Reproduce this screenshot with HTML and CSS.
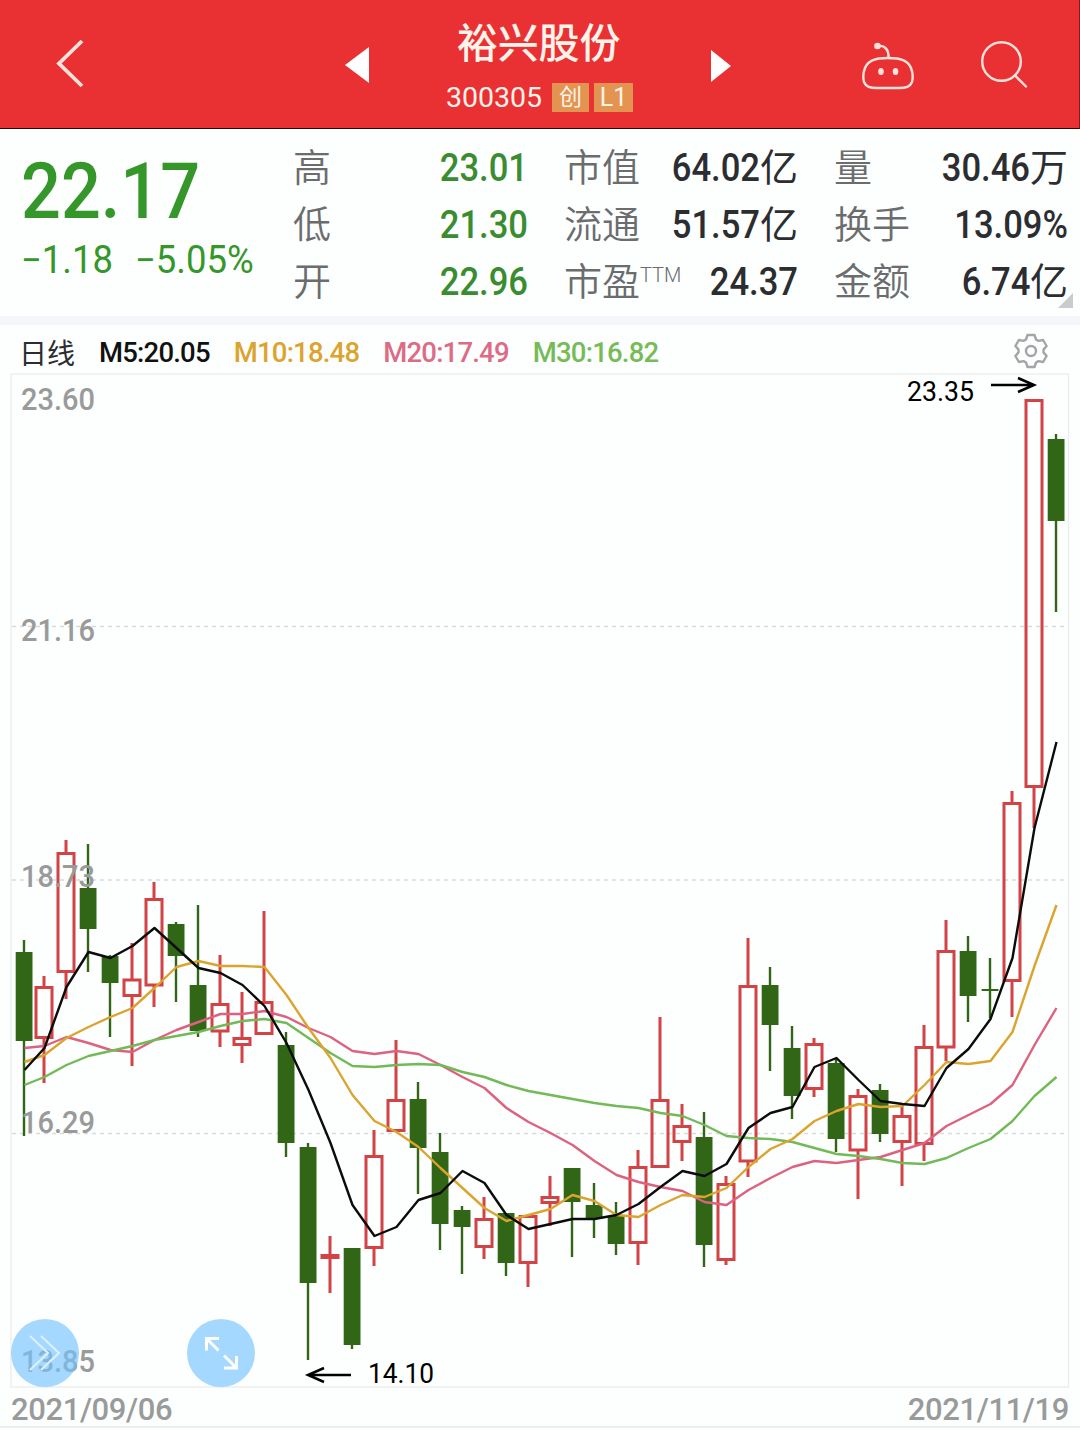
FILE: index.html
```html
<!DOCTYPE html>
<html lang="zh-CN">

<head>
  <meta charset="UTF-8">
  <meta name="viewport" content="width=device-width, initial-scale=1.0">
  <title>裕兴股份 300305</title>
  <link rel="stylesheet" href="styles.css">
</head>

<body>
  <header class="topbar">
    <svg class="back" width="32" height="52" viewBox="0 0 32 52"><path d="M28 5L5 27.500L28 50" /></svg>
    <svg class="prev" width="24" height="36" viewBox="0 0 24 36"><path d="M0 18L24 0V36Z" /></svg>
    <div class="stock">
      <h1>裕兴股份</h1>
      <div class="code">
        <span>300305</span>
        <span class="tag">创</span>
        <span class="tag">L1</span>
      </div>
    </div>
    <svg class="next" width="20" height="32" viewBox="0 0 20 32"><path d="M0 0L20 16L0 32Z" /></svg>
    <svg class="robot" width="54" height="50" viewBox="0 0 54 50">
      <path d="M17 5C24 4 28 9 27.500 17" />
      <path d="M27 17C41 17 47 20 50 27C52 32 52 37 51 41C49 46 45 47 38 47H16C9 47 5 46 3 41C2 37 2 32 4 27C7 20 13 17 27 17Z" />
      <circle class="dot" cx="16.500" cy="5" r="3.300" />
      <ellipse class="dot" cx="20" cy="30.500" rx="2.800" ry="3.600" />
      <ellipse class="dot" cx="34.500" cy="30.500" rx="2.800" ry="3.600" />
    </svg>
    <svg class="search" width="50" height="50" viewBox="0 0 50 50">
      <circle cx="21.500" cy="21.500" r="19.300" />
      <path d="M35 35.500L46 46.500" />
    </svg>
  </header>

  <section class="quote">
    <div class="price">
      <div class="last">22.17</div>
      <div class="change"><span>−1.18</span><span>−5.05%</span></div>
    </div>
    <dl class="stats">
      <dt>高</dt><dd class="down"><b>23.01</b></dd>
      <dt>市值</dt><dd><b>64.02</b>亿</dd>
      <dt>量</dt><dd><b>30.46</b>万</dd>
      <dt>低</dt><dd class="down"><b>21.30</b></dd>
      <dt>流通</dt><dd><b>51.57</b>亿</dd>
      <dt>换手</dt><dd><b>13.09%</b></dd>
      <dt>开</dt><dd class="down"><b>22.96</b></dd>
      <dt>市盈<sup>TTM</sup></dt><dd><b>24.37</b></dd>
      <dt>金额</dt><dd><b>6.74</b>亿</dd>
    </dl>
    <i class="corner"></i>
  </section>

  <div class="legend">
    <span class="period">日线</span>
    <span class="m5">M5:20.05</span>
    <span class="m10">M10:18.48</span>
    <span class="m20">M20:17.49</span>
    <span class="m30">M30:16.82</span>
    <svg class="gear" width="36" height="36" viewBox="-18 -18 36 36">
      <path d="M-3.500 -16H3.500L5 -11.500L7.500 -10.100L12.100 -11L15.600 -5L12.500 -1.400V1.400L15.600 5L12.100 11L7.500 10.100L5 11.500L3.500 16H-3.500L-5 11.500L-7.500 10.100L-12.100 11L-15.600 5L-12.500 1.400V-1.400L-15.600 -5L-12.100 -11L-7.500 -10.100L-5 -11.500Z" />
      <circle r="5" />
    </svg>
  </div>

  <svg id="chart" class="chart" width="1080" height="1015" viewBox="0 373 1080 1015">
    <rect class="frame" x="11" y="374" width="1057.500" height="1013" />
    <path class="grid" d="M12 626.500H1068M12 880H1068M12 1133.500H1068" />
    <g id="candles"></g>
    <g id="averages"></g>
    <g class="axis">
      <text x="21" y="410" textLength="74" lengthAdjust="spacingAndGlyphs">23.60</text>
      <text x="21" y="641" textLength="74" lengthAdjust="spacingAndGlyphs">21.16</text>
      <text x="21" y="887" textLength="74" lengthAdjust="spacingAndGlyphs">18.73</text>
      <text x="21" y="1133" textLength="74" lengthAdjust="spacingAndGlyphs">16.29</text>
      <text x="21" y="1372" textLength="74" lengthAdjust="spacingAndGlyphs">13.85</text>
    </g>
    <g class="mark">
      <text x="907" y="401" textLength="67" lengthAdjust="spacingAndGlyphs">23.35</text>
      <path d="M991 385H1034M1018 378L1034 385L1018 392" />
      <text x="368" y="1383" textLength="66" lengthAdjust="spacingAndGlyphs">14.10</text>
      <path d="M351 1375H308M324 1368L308 1375L324 1382" />
    </g>
    <g class="round">
      <circle cx="45" cy="1353" r="34" />
      <path class="thin" d="M30 1336L48 1353L30 1370M41 1336L59 1353L41 1370" />
      <circle cx="221" cy="1353" r="34" />
      <path d="M219 1338.500H206.500V1350.500M206.500 1338.500L218.500 1350.500M224 1368H236.500V1356M236.500 1368L224 1355.500" />
    </g>
  </svg>

  <footer class="dates">
    <span>2021/09/06</span>
    <span>2021/11/19</span>
  </footer>

  <script src="script.js"></script>
</body>

</html>
```
FILE: styles.css
```css
* {
  box-sizing: border-box;
}

body {
  margin: 0;
  width: 1080px;
  background-color: #fdfefe;
  font-family: Roboto, "Noto Sans CJK SC", sans-serif;
}

svg {
  display: block;
  flex: none;
  fill: none;
}

.topbar {
  display: flex;
  align-items: flex-start;
  height: 129px;
  background-color: #e93134;
  border-bottom: 1px solid #2b0808;
  border-right: 1px solid #7a2022;
  color: #fff3ea;
}

.topbar svg {
  stroke: #ffe3da;
  stroke-width: 2.4;
  stroke-linecap: round;
}

.topbar .back {
  margin: 36px 0 0 54px;
  stroke-width: 3.8;
  stroke-linecap: butt;
}

.topbar .prev {
  margin: 47px 0 0 259px;
  fill: #fff;
  stroke: none;
}

.topbar .next {
  margin: 50px 0 0 41px;
  fill: #fff;
  stroke: none;
}

.topbar .robot {
  margin: 41px 0 0 130px;
}

.topbar .search {
  margin: 40px 0 0 65px;
}

.robot .dot {
  fill: #ffe3da;
  stroke: none;
}

.stock {
  width: 237px;
  margin-left: 64px;
  padding-left: 13px;
  white-space: nowrap;
}

.stock h1 {
  margin: 14px 0 0 11px;
  font-size: 41px;
  line-height: 60px;
  font-weight: 500;
  letter-spacing: -0.2px;
}

.code {
  display: flex;
  align-items: center;
  height: 47px;
  font-size: 28.5px;
}

.tag {
  width: 37px;
  height: 29px;
  margin-left: 10px;
  background-color: #e29450;
  font-size: 23px;
  line-height: 29px;
  text-align: center;
}

.tag + .tag {
  width: 39px;
  margin-left: 5px;
  font-size: 25px;
}

.quote {
  position: relative;
  display: flex;
  height: 196px;
  padding-top: 11px;
  border-bottom: 9px solid #f5f6f9;
}

.price {
  width: 293px;
  padding-left: 21px;
  color: #35962a;
}

.last {
  font-size: 78px;
  line-height: 104px;
  font-weight: 500;
  transform: scaleX(0.9);
  transform-origin: left;
}

.change {
  display: flex;
  font-size: 38px;
  line-height: 33px;
}

.change span {
  width: 114px;
  transform: scaleX(0.96);
  transform-origin: left;
}

.stats {
  display: grid;
  grid-template-columns: 76px 159px 112px 158px 112px 158px;
  grid-auto-rows: 57px;
  margin: 0;
  font-size: 38px;
  line-height: 57px;
  white-space: nowrap;
}

.stats dt {
  color: #6a6c6e;
  font-weight: 350;
}

.stats dt:nth-of-type(3n + 2),
.stats dt:nth-of-type(3n) {
  padding-left: 36px;
}

.stats dd {
  display: flex;
  justify-content: flex-end;
  margin: 0;
  color: #2b2d30;
}

.stats b {
  font-weight: 500;
  transform: scaleX(0.91);
  transform-origin: right;
}

.stats .down b {
  color: #3a8c31;
}

.stats sup {
  font-size: 20px;
  line-height: 0;
  vertical-align: 13px;
}

.corner {
  position: absolute;
  right: 7px;
  bottom: 8px;
  border-left: 15px solid transparent;
  border-bottom: 15px solid #cacbcd;
}

.legend {
  display: flex;
  align-items: center;
  height: 48px;
  padding: 6px 31px 0 19px;
  font-size: 27.5px;
  font-weight: 500;
  letter-spacing: -0.8px;
  white-space: nowrap;
}

.legend span {
  margin-right: 24px;
}

.legend .period {
  color: #2b2d30;
  font-size: 28px;
  font-weight: 400;
  letter-spacing: 0;
}

.m5 {
  color: #111;
}

.m10 {
  color: #dba42e;
}

.m20 {
  color: #dc6c85;
}

.m30 {
  color: #76bb58;
}

.gear {
  margin: -2px 0 0 auto;
  stroke: #a3a5a8;
  stroke-width: 2.4;
  stroke-linejoin: round;
}

.chart {
  overflow: visible;
}

.frame {
  stroke: #edefef;
  stroke-width: 1.5;
}

.grid {
  stroke: #d9dbdb;
  stroke-width: 1.5;
  stroke-dasharray: 4 4;
}

.axis text {
  fill: #999b9b;
  font-size: 31.5px;
  font-weight: 500;
}

.mark text {
  fill: #000;
  font-size: 27px;
}

.mark path {
  stroke: #000;
  stroke-width: 2.5;
}

.up {
  stroke: #d24345;
  stroke-width: 3;
}

.fall {
  fill: #326617;
  stroke: none;
}

.line {
  stroke-width: 2.4;
  stroke-linejoin: round;
}

.line-m5 {
  stroke: #0c0c0c;
}

.line-m10 {
  stroke: #dba42e;
}

.line-m20 {
  stroke: #dc6280;
}

.line-m30 {
  stroke: #72b957;
}

.round circle {
  fill: #75c3fd;
  fill-opacity: 0.65;
}

.round path {
  stroke: #fff;
  stroke-width: 3;
}

.round .thin {
  stroke: #dff1ff;
  stroke-width: 2;
}

.dates {
  display: flex;
  justify-content: space-between;
  height: 40px;
  padding: 0 11px;
  border-bottom: 2px solid #eceeee;
  color: #999b9b;
  font-size: 31px;
  font-weight: 500;
  line-height: 43px;
  letter-spacing: -0.4px;
}
```
FILE: script.js
```js
const NS = 'http://www.w3.org/2000/svg';

// [up, high, body top, body bottom, low]
const candles = [
  [0, 940, 952, 1041, 1136], [1, 976, 986, 1039, 1083], [1, 840, 852, 973, 999],
  [0, 844, 888, 929, 972], [0, 955, 956, 983, 1037], [1, 943, 978.5, 997, 1066],
  [1, 882, 898, 986.5, 1007], [0, 922, 924, 956, 1002], [0, 905, 985, 1031, 1037],
  [1, 955, 1003, 1032.5, 1047], [1, 992, 1037, 1046, 1063], [1, 911, 1001, 1035, 1035],
  [0, 1032, 1045, 1143, 1157], [0, 1143, 1147, 1283, 1360], [1, 1236, 1254, 1259, 1293],
  [0, 1248, 1248, 1345, 1349], [1, 1130, 1155, 1249, 1266], [1, 1040, 1099, 1132, 1132],
  [0, 1082, 1099, 1148, 1194], [0, 1133, 1152, 1224, 1250], [0, 1206, 1210, 1227, 1274],
  [1, 1197, 1218, 1248, 1259], [0, 1213, 1213, 1263, 1276], [1, 1215, 1215, 1264, 1287],
  [1, 1176, 1196, 1204, 1226], [0, 1168, 1168, 1202, 1257], [0, 1183, 1205, 1219, 1238],
  [0, 1202, 1216, 1244, 1255], [1, 1150, 1166, 1244, 1265], [1, 1017, 1099, 1168, 1168],
  [1, 1104, 1125, 1143, 1161], [0, 1112, 1137, 1245, 1267], [1, 1176, 1183, 1261, 1265],
  [1, 938, 985, 1162.5, 1177], [0, 967, 985, 1025, 1071], [0, 1026, 1048, 1096, 1119],
  [1, 1038, 1043, 1090, 1097], [0, 1058, 1063, 1139, 1152], [1, 1089, 1095, 1151.5, 1199],
  [0, 1084, 1090, 1134, 1142], [1, 1103, 1115, 1143, 1186], [1, 1025, 1046, 1145, 1161],
  [1, 920, 950, 1048.5, 1061], [0, 936, 951, 996, 1022], [0, 958, 989, 991, 1018],
  [1, 791, 802, 982, 1017], [1, 399, 399, 788, 828], [0, 434, 439, 521, 612]
];

const averages = {
  m20: [1048, 1046, 1037, 1043, 1050, 1052, 1040, 1030, 1022, 1014, 1014, 1011, 1017, 1028, 1037, 1051,
    1054, 1051, 1054, 1065, 1077, 1088, 1108, 1122, 1133, 1145, 1161, 1175, 1182, 1187, 1191, 1202,
    1205, 1190, 1178, 1167, 1161, 1163, 1160, 1157, 1150, 1143, 1126, 1115, 1104, 1085, 1045, 1008],
  m30: [1085, 1077, 1065, 1056, 1051, 1046, 1040, 1036, 1032, 1026, 1021, 1019, 1023, 1038, 1053, 1066,
    1067, 1065, 1064, 1065, 1072, 1077, 1085, 1091, 1095, 1099, 1103, 1106, 1108, 1113, 1116, 1125,
    1136, 1138, 1139, 1142, 1148, 1154, 1156, 1159, 1163, 1164, 1158, 1148, 1139, 1121, 1096, 1077],
  m10: [1062, 1055, 1038, 1027, 1017, 1008, 988, 967, 961, 966, 966, 967, 995, 1028, 1058, 1095,
    1121, 1132, 1147, 1168, 1188, 1208, 1221, 1215, 1209, 1195, 1201, 1215, 1217, 1205, 1195, 1197,
    1188, 1167, 1149, 1139, 1121, 1111, 1104, 1107, 1106, 1085, 1062, 1064, 1061, 1032, 966, 905],
  m5: [1070, 1048, 987, 952, 958, 946, 928, 948, 968, 973, 985, 1006, 1043, 1090, 1143, 1205,
    1236, 1227, 1200, 1193, 1171, 1183, 1215, 1229, 1224, 1219, 1219, 1215, 1204, 1187, 1171, 1176,
    1164, 1128, 1113, 1107, 1067, 1058, 1080, 1101, 1104, 1106, 1068, 1049, 1019, 958, 828, 742]
};

function center(i) {
  return i === 0 ? 24 : 22 + 22 * i;
}

function addPath(parent, className, d) {
  const path = document.createElementNS(NS, 'path');
  path.setAttribute('class', className);
  path.setAttribute('d', d);
  parent.appendChild(path);
}

const candleLayer = document.querySelector('#candles');
candles.forEach(([up, high, top, bottom, low], i) => {
  const x = center(i);
  if (up) {
    addPath(candleLayer, 'up',
      `M${x - 8} ${top + 1.5}h16V${bottom - 1.5}h-16ZM${x} ${high}V${top}M${x} ${bottom}V${low}`);
  } else {
    addPath(candleLayer, 'fall', `M${x - 8.3} ${top}h16.8V${bottom}h-16.8Z`);
    addPath(candleLayer, 'fall', `M${x - 1.2} ${high}h2.4V${low}h-2.4Z`);
  }
});

const averageLayer = document.querySelector('#averages');
for (const name in averages) {
  const points = averages[name].map((y, i) => `${center(i) + 0.5} ${y}`);
  addPath(averageLayer, `line line-${name}`, 'M' + points.join('L'));
}
```
